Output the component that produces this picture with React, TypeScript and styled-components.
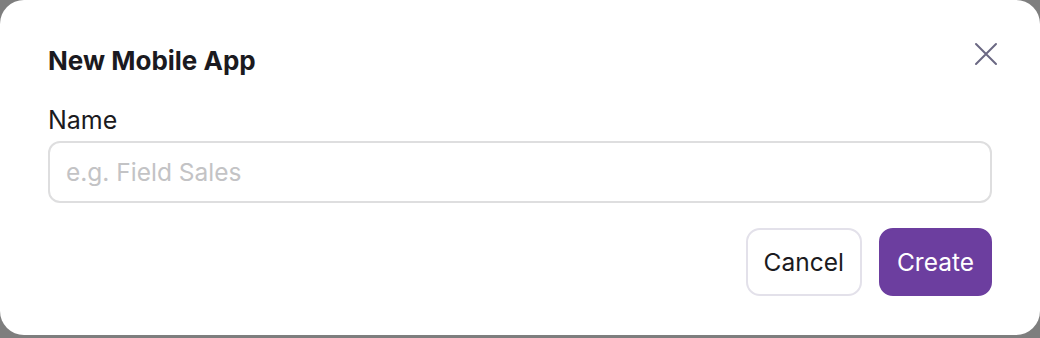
import { createGlobalStyle } from "styled-components";
import styled from "styled-components";

const GlobalStyle = createGlobalStyle`
  html, body {
    margin: 0;
    padding: 0;
    background: #7e7e7e;
  }
  body {
    font-family: Inter, "Liberation Sans", Arial, sans-serif;
    -webkit-font-smoothing: antialiased;
  }
`;

const Dialog = styled.div`
  box-sizing: border-box;
  width: 1040px;
  height: 335px;
  background: #ffffff;
  border-radius: 24px;
  padding: 44px 48px 39px;
  display: flex;
  flex-direction: column;
`;

const Header = styled.div`
  display: flex;
  align-items: flex-start;
  justify-content: space-between;
`;

const Title = styled.h2`
  margin: 0;
  font-size: 26px;
  line-height: 34px;
  font-weight: 700;
  color: #1b1a20;
  letter-spacing: 0;
`;

const CloseButton = styled.button`
  border: 0;
  background: none;
  padding: 0;
  margin: -6px -10px 0 0;
  width: 32px;
  height: 32px;
  display: flex;
  align-items: center;
  justify-content: center;
  color: #6b6883;
  cursor: pointer;
`;

const Label = styled.label`
  margin-top: 28px;
  font-size: 25px;
  line-height: 28px;
  color: #1b1a20;
`;

const Input = styled.input`
  box-sizing: border-box;
  margin-top: 7px;
  width: 100%;
  height: 62px;
  border: 2px solid #dededf;
  border-radius: 12px;
  padding: 0 16px;
  font-family: inherit;
  font-size: 24.5px;
  color: #1b1a20;
  outline: none;

  &::placeholder {
    color: #c3c3c5;
  }
`;

const Actions = styled.div`
  margin-top: 25px;
  display: flex;
  justify-content: flex-end;
  gap: 17px;
`;

const Button = styled.button<{ $primary?: boolean }>`
  box-sizing: border-box;
  height: 68px;
  padding: 0 16px;
  border-radius: 14px;
  font-family: inherit;
  font-size: 24.5px;
  cursor: pointer;
  border: 2px solid ${(p) => (p.$primary ? "#6c3e9f" : "#e3e1ea")};
  background: ${(p) => (p.$primary ? "#6c3e9f" : "#ffffff")};
  color: ${(p) => (p.$primary ? "#ffffff" : "#1b1a20")};
`;

export default function App() {
  return (
    <>
      <GlobalStyle />
      <Dialog>
        <Header>
          <Title>New Mobile App</Title>
          <CloseButton aria-label="Close">
            <svg width="24" height="24" viewBox="0 0 24 24" fill="none" stroke="currentColor" strokeWidth="2" strokeLinecap="round">
              <path d="M2 2 L22 22 M22 2 L2 22" />
            </svg>
          </CloseButton>
        </Header>
        <Label htmlFor="app-name">Name</Label>
        <Input id="app-name" placeholder="e.g. Field Sales" />
        <Actions>
          <Button>Cancel</Button>
          <Button $primary>Create</Button>
        </Actions>
      </Dialog>
    </>
  );
}
